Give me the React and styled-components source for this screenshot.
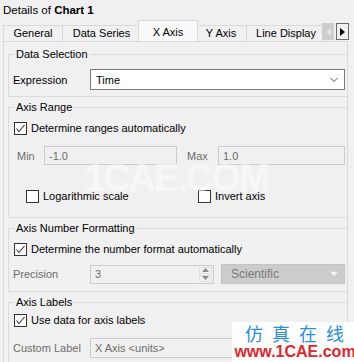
import styled, { createGlobalStyle } from 'styled-components'

const GlobalStyle = createGlobalStyle`
  html, body { margin: 0; padding: 0; }
  body {
    background: #f0f0f0;
    font-family: "Liberation Sans", Arial, sans-serif;
    font-size: 11px;
    color: #000;
  }
`

const Window = styled.div`
  position: relative;
  width: 354px;
  height: 362px;
  overflow: hidden;
  background: #f0f0f0;
`

const Title = styled.div`
  height: 20px;
  line-height: 21px;
  padding-left: 3px;
  font-size: 11.5px;
  b { font-weight: bold; }
`

const TabStrip = styled.div`
  position: relative;
  display: flex;
  align-items: flex-end;
  height: 21px;
  padding-left: 3px;
`

const Tab = styled.div`
  box-sizing: border-box;
  width: ${p => p.$w}px;
  height: ${p => (p.$active ? 21 : 16)}px;
  margin-left: ${p => (p.$active ? -2 : 0)}px;
  margin-right: ${p => (p.$active ? -3 : -1)}px;
  border: 1px solid #d9d9d9;
  border-bottom: none;
  background: ${p => (p.$active ? '#f9f9f9' : '#f0f0f0')};
  position: relative;
  z-index: ${p => (p.$active ? 2 : 1)};
  text-align: center;
  line-height: ${p => (p.$active ? 22 : 15)}px;
  white-space: nowrap;
`

const ScrollButtons = styled.div`
  position: absolute;
  left: 322px;
  top: 3px;
  display: flex;
  gap: 2px;
  z-index: 3;
`

const ScrollBtn = styled.div`
  box-sizing: border-box;
  width: ${p => (p.$on ? 13 : 12)}px;
  height: 17px;
  background: ${p => (p.$on ? '#f0f0f0' : '#cdcdcd')};
  border: 1px solid ${p => (p.$on ? '#6a6a6a' : '#cdcdcd')};
  display: flex;
  align-items: center;
  justify-content: center;
`

const Panel = styled.div`
  box-sizing: border-box;
  margin-left: 3px;
  width: 345px;
  height: 330px;
  border: 1px solid #d9d9d9;
  border-bottom: none;
  background: #f0f0f0;
  padding: 5px 0 0 4px;
  overflow: hidden;
`

const Group = styled.fieldset`
  box-sizing: border-box;
  width: 352px;
  margin: ${p => p.$mt || 0}px 0 0 0;
  padding: ${p => p.$pt}px 0 ${p => p.$pb}px 0;
  border: 1px solid #dcdcdc;
  min-width: 0;
`

const Legend = styled.legend`
  padding: 0 2px;
  margin-left: 5px;
  line-height: 14px;
`

const Row = styled.div`
  display: flex;
  align-items: center;
  padding-left: ${p => p.$pl || 0}px;
  margin-top: ${p => p.$mt || 0}px;
`

const FieldLabel = styled.div`
  width: ${p => p.$w}px;
  flex: none;
  color: ${p => (p.$disabled ? '#6d6d6d' : '#000')};
  line-height: 14px;
  margin-left: ${p => p.$ml || 0}px;
`

const Box = styled.div`
  box-sizing: border-box;
  position: relative;
  flex: none;
  width: ${p => p.$w}px;
  height: ${p => p.$h || 19}px;
  margin-left: ${p => p.$ml || 0}px;
  border: 1px solid ${p => (p.$disabled ? '#cccccc' : '#7a7a7a')};
  background: ${p => (p.$disabled ? '#f0f0f0' : '#fff')};
  color: ${p => (p.$disabled ? '#6d6d6d' : '#000')};
  padding-left: ${p => p.$pad || 4}px;
  display: flex;
  align-items: center;
  line-height: 14px;
`

const GreySelect = styled(Box)`
  background: #cccccc;
  border-color: #c4c4c4;
  color: #7a7a7a;
  font-size: 12px;
`

const BoxIcon = styled.div`
  position: absolute;
  right: ${p => p.$r}px;
  top: 50%;
  transform: translateY(-50%);
  display: flex;
`

const Spinner = styled.div`
  position: absolute;
  right: 1px;
  top: 1px;
  bottom: 1px;
  width: 13px;
  display: flex;
  flex-direction: column;
  gap: 1px;
`

const SpinPart = styled.div`
  flex: 1;
  border: 1px solid #e0e0e0;
  display: flex;
  align-items: center;
  justify-content: center;
`

const CheckItem = styled.label`
  display: flex;
  align-items: center;
  gap: 4px;
  width: ${p => (p.$w ? `${p.$w}px` : 'auto')};
  height: 13px;
  line-height: 13px;
  white-space: nowrap;
`

const CheckBox = styled.span`
  box-sizing: border-box;
  width: 13px;
  height: 13px;
  flex: none;
  border: 1px solid #333;
  background: #fff;
  display: flex;
  align-items: center;
  justify-content: center;
`

const FaintMark = styled.div`
  position: absolute;
  left: 84px;
  top: 157px;
  font: bold 38px "Liberation Sans", Arial, sans-serif;
  letter-spacing: -2px;
  color: rgba(255, 255, 255, 0.55);
  pointer-events: none;
`

const Stamp = styled.div`
  position: absolute;
  left: 232px;
  top: 322px;
  width: 122px;
  height: 40px;
  background: rgba(255, 255, 255, 0.92);
  display: flex;
  flex-direction: column;
  align-items: center;
`

const StampCn = styled.div`
  font: 18px "Noto Sans CJK SC", sans-serif;
  letter-spacing: 9px;
  margin-left: 12px;
  line-height: 22px;
  color: #2b8de4;
`

const StampEn = styled.div`
  font: bold 16px "Liberation Sans", Arial, sans-serif;
  line-height: 16px;
  color: #e3262b;
  margin-left: 4px;
`

function Check ({ checked, children, w }) {
  return (
    <CheckItem $w={w}>
      <CheckBox>
        {checked && (
          <svg width="11" height="11" viewBox="0 0 11 11">
            <polyline points="1.5,5.5 4,8.5 9.5,2" fill="none" stroke="#333" strokeWidth="1.1" />
          </svg>
        )}
      </CheckBox>
      {children}
    </CheckItem>
  )
}

const tabs = [
  { label: 'General', w: 60 },
  { label: 'Data Series', w: 79 },
  { label: 'X Axis', w: 60, active: true },
  { label: 'Y Axis', w: 52 },
  { label: 'Line Display', w: 80 },
]

export default function App () {
  return (
    <>
      <GlobalStyle />
      <Window>
        <Title>Details of <b>Chart 1</b></Title>
        <TabStrip>
          {tabs.map(t => (
            <Tab key={t.label} $w={t.w} $active={t.active}>{t.label}</Tab>
          ))}
          <ScrollButtons>
            <ScrollBtn>
              <svg width="5" height="8" viewBox="0 0 5 8"><polygon points="5,0 0,4 5,8" fill="#e6e6e6" /></svg>
            </ScrollBtn>
            <ScrollBtn $on>
              <svg width="5" height="8" viewBox="0 0 5 8"><polygon points="0,0 5,4 0,8" fill="#000" /></svg>
            </ScrollBtn>
          </ScrollButtons>
        </TabStrip>
        <Panel>
          <Group $pt={8} $pb={6}>
            <Legend>Data Selection</Legend>
            <Row $pl={4}>
              <FieldLabel $w={77}>Expression</FieldLabel>
              <Box $w={255} $h={21} $pad={5}>
                Time
                <BoxIcon $r={6}>
                  <svg width="8" height="5" viewBox="0 0 8 5"><polyline points="0.5,0.5 4,4 7.5,0.5" fill="none" stroke="#555" /></svg>
                </BoxIcon>
              </Box>
            </Row>
          </Group>

          <Group $mt={3} $pt={8} $pb={14}>
            <Legend>Axis Range</Legend>
            <Row $pl={5}>
              <Check checked>Determine ranges automatically</Check>
            </Row>
            <Row $pl={8} $mt={11}>
              <FieldLabel $w={27} $disabled>Min</FieldLabel>
              <Box $w={133} $disabled>-1.0</Box>
              <FieldLabel $w={31} $ml={10} $disabled>Max</FieldLabel>
              <Box $w={127} $disabled>1.0</Box>
            </Row>
            <Row $pl={17} $mt={25}>
              <Check w={172}>Logarithmic scale</Check>
              <Check>Invert axis</Check>
            </Row>
          </Group>

          <Group $mt={3} $pt={8} $pb={7}>
            <Legend>Axis Number Formatting</Legend>
            <Row $pl={5}>
              <Check checked>Determine the number format automatically</Check>
            </Row>
            <Row $pl={4} $mt={8}>
              <FieldLabel $w={77} $disabled>Precision</FieldLabel>
              <Box $w={124} $h={19} $disabled>
                3
                <Spinner>
                  <SpinPart>
                    <svg width="7" height="4" viewBox="0 0 7 4"><polygon points="0,4 3.5,0 7,4" fill="#8a8a8a" /></svg>
                  </SpinPart>
                  <SpinPart>
                    <svg width="7" height="4" viewBox="0 0 7 4"><polygon points="0,0 3.5,4 7,0" fill="#8a8a8a" /></svg>
                  </SpinPart>
                </Spinner>
              </Box>
              <GreySelect $w={124} $h={20} $ml={7} $pad={9}>
                Scientific
                <BoxIcon $r={6}>
                  <svg width="8" height="5" viewBox="0 0 8 5"><polygon points="0,0 8,0 4,5" fill="#f2f2f2" /></svg>
                </BoxIcon>
              </GreySelect>
            </Row>
          </Group>

          <Group $mt={3} $pt={5} $pb={20}>
            <Legend>Axis Labels</Legend>
            <Row $pl={5}>
              <Check checked>Use data for axis labels</Check>
            </Row>
            <Row $pl={4} $mt={11}>
              <FieldLabel $w={77} $disabled>Custom Label</FieldLabel>
              <Box $w={255} $h={20} $disabled>X Axis &lt;units&gt;</Box>
            </Row>
          </Group>
        </Panel>

        <FaintMark>1CAE.COM</FaintMark>
        <Stamp>
          <StampCn>仿真在线</StampCn>
          <StampEn>www.1CAE.com</StampEn>
        </Stamp>
      </Window>
    </>
  )
}
